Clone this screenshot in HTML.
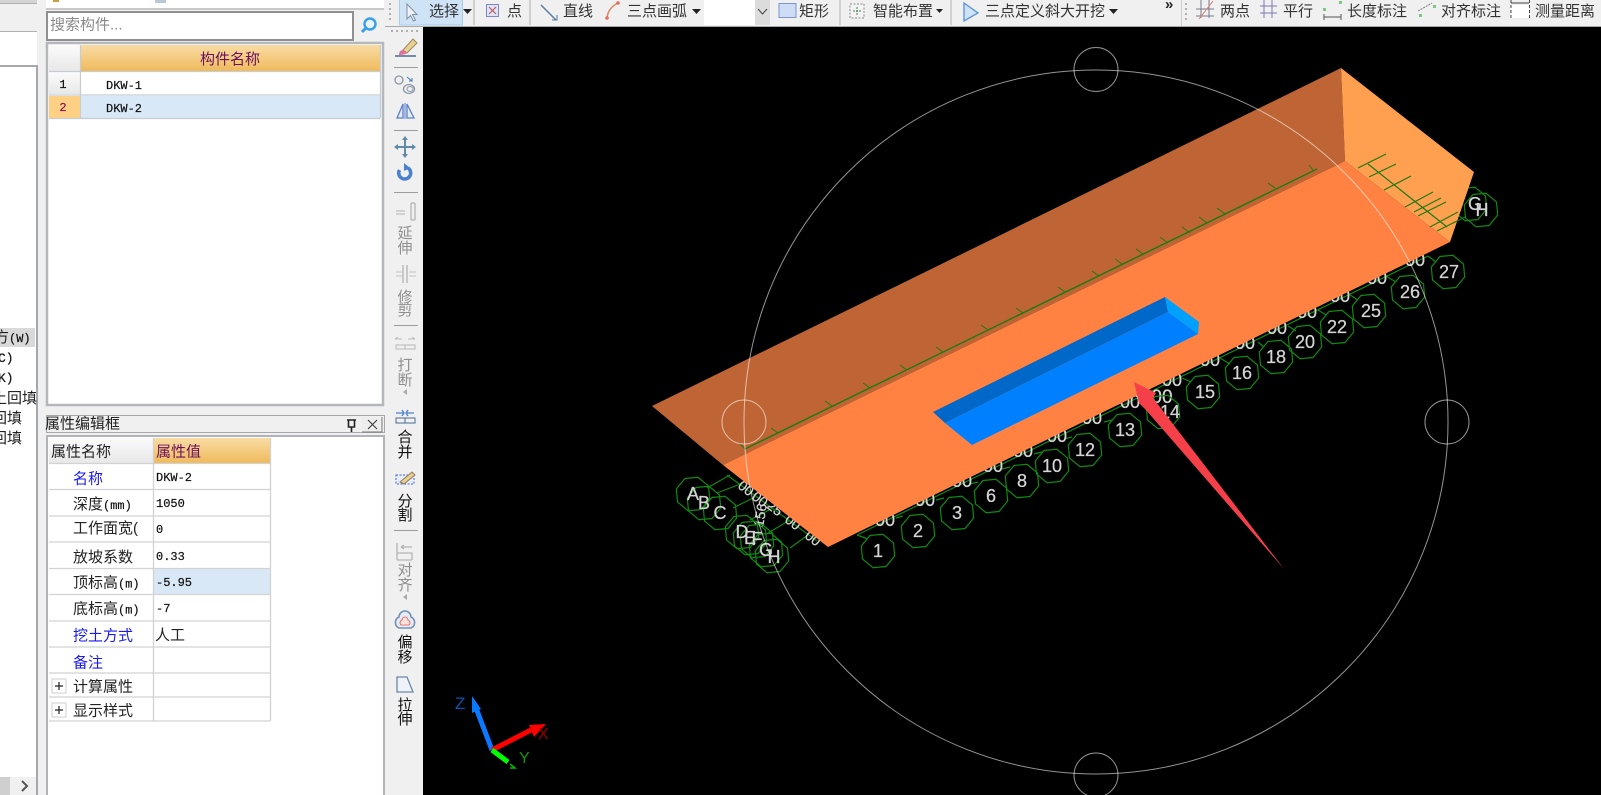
<!DOCTYPE html>
<html lang="zh">
<head>
<meta charset="utf-8">
<title>属性编辑</title>
<style>
html,body{margin:0;padding:0;background:#f0f0f0;width:1601px;height:795px;overflow:hidden}
svg{display:block;position:absolute;left:0;top:0;filter:blur(.35px)}
text{font-family:"Liberation Sans","Noto Sans CJK SC",sans-serif;font-size:15px;fill:#222;white-space:pre}
.m{font-family:"Liberation Mono","Noto Sans CJK SC",monospace;font-size:12px;fill:#111;stroke:#111;stroke-width:.2}
.b{fill:#1a1aee}
.d{fill:#8f8f8f}
.w{fill:#d4d4d4;font-size:18px;text-anchor:middle;stroke:#d4d4d4;stroke-width:.25}
.tb{fill:#333}
.c{text-anchor:middle}
</style>
</head>
<body>
<svg width="1601" height="795" viewBox="0 0 1601 795" xmlns="http://www.w3.org/2000/svg">
<defs>
<linearGradient id="go" x1="0" y1="0" x2="0" y2="1"><stop offset="0" stop-color="#f8dca4"/><stop offset="1" stop-color="#f0ba5c"/></linearGradient>
<linearGradient id="gg" x1="0" y1="0" x2="0" y2="1"><stop offset="0" stop-color="#fbfbfb"/><stop offset="1" stop-color="#e8e8e8"/></linearGradient>
<polygon id="o" points="16.7,5 8,15.5 -5,16.7 -15.5,8 -16.7,-5 -8,-15.5 5,-16.7 15.5,-8" fill="none" stroke="#108a10" stroke-width="1.2"/>
</defs>

<rect width="1601" height="795" fill="#f0f0f0"/>

<!-- left panel -->
<rect x="0" y="0" width="37" height="3" fill="#d4d4d4"/>
<rect x="0" y="3" width="37" height="1" fill="#b0b0b0"/>
<rect x="0" y="31" width="37" height="1" fill="#b0b0b0"/>
<rect x="0" y="32" width="37" height="33" fill="#fff"/>
<rect x="0" y="65" width="37" height="2" fill="#a4a8ac"/>
<rect x="0" y="67" width="36" height="728" fill="#fff"/>
<rect x="36" y="65" width="2" height="730" fill="#a4a8ac"/>
<rect x="0" y="328" width="35" height="19" fill="#d9d9d9"/>
<text x="-6" y="342" font-size="14">方<tspan class="m">(W)</tspan></text>
<text x="-2" y="362" class="m" style="font-size:13px">C)</text>
<text x="-2" y="382" class="m" style="font-size:13px">K)</text>
<text x="-8" y="403">土回填</text>
<text x="-8" y="423">回填</text>
<text x="-8" y="443">回填</text>
<rect x="0" y="777" width="36" height="18" fill="#f0f0f0"/>
<rect x="0" y="777" width="10" height="18" fill="#cfcfcf"/>
<path d="M22 781l5 5-5 5" fill="none" stroke="#555" stroke-width="2"/>

<!-- middle top -->
<rect x="46" y="0" width="338" height="8" fill="#fff"/>
<rect x="46" y="8" width="338" height="2" fill="#c8c8c8"/>
<rect x="53" y="0" width="6" height="2" fill="#c9a040"/>
<rect x="155" y="0" width="11" height="3" fill="#b8c8d8"/>
<rect x="47" y="12" width="306" height="28" fill="#fff" stroke="#909090" stroke-width="2"/>
<text x="50" y="29.500" style="fill:#8a8a8a">搜索构件...</text>
<circle cx="370" cy="24" r="5.500" fill="#eaf6ff" stroke="#3a9fe8" stroke-width="2.400"/>
<path d="M365.500 28.500L362 32" stroke="#3a9fe8" stroke-width="3"/>

<!-- component table -->
<rect x="47" y="43" width="336" height="362" fill="#fff" stroke="#b4b8bc" stroke-width="2.500"/>
<rect x="49" y="45" width="31" height="26" fill="url(#gg)"/>
<rect x="81" y="45" width="299" height="26" fill="url(#go)"/>
<text x="230" y="64" class="c" style="fill:#6a1060">构件名称</text>
<rect x="49" y="72" width="31" height="22" fill="url(#gg)"/>
<rect x="81" y="72" width="299" height="22" fill="#fff"/>
<rect x="49" y="96" width="31" height="22" fill="#fdd084"/>
<rect x="81" y="96" width="299" height="22" fill="#d8e8f6"/>
<path d="M49 71.500H380M49 95H380M49 118.500H380M80.500 45V118M380.500 45V118" stroke="#c8ccd0" fill="none" stroke-width="1.200"/>
<text x="63" y="88" class="m c">1</text>
<text x="63" y="111" class="m c" style="fill:#8a1060;stroke:#8a1060">2</text>
<text x="106" y="89" class="m">DKW-1</text>
<text x="106" y="112" class="m">DKW-2</text>

<!-- title bar -->
<rect x="46.500" y="415.500" width="338" height="17" fill="#f0f0f0" stroke="#a8a8a8"/>
<text x="45" y="428.500">属性编辑框</text>
<path d="M347 420h9M348.500 420v7h6v-7M351.500 427v5" fill="none" stroke="#222" stroke-width="1.600"/>
<rect x="362" y="417" width="20" height="15" fill="#ededed"/>
<path d="M362 432H382V417" fill="none" stroke="#777"/>
<path d="M368 420l9 9M377 420l-9 9" stroke="#333"/>

<!-- property panel -->
<rect x="47" y="436" width="337" height="360" fill="#fff" stroke="#b0b4b8" stroke-width="2"/>
<rect x="49" y="438" width="104" height="25" fill="url(#gg)"/>
<rect x="154" y="438" width="116" height="25" fill="url(#go)"/>
<rect x="154" y="569" width="116" height="25" fill="#d8e8f6"/>
<path d="M49 463.500H270M49 489.500H270M49 516H270M49 542H270M49 568.500H270M49 594.500H270M49 621H270M49 647H270M49 673H270M49 697H270M49 721H270M153.500 438V721M270.500 438V721" stroke="#d2d2d2" stroke-width="1.300" fill="none"/>
<text x="51" y="456.500">属性名称</text>
<text x="156" y="456.500" style="fill:#6a1060">属性值</text>
<text x="73" y="483.500" class="b">名称</text>
<text x="73" y="509">深度<tspan class="m">(mm)</tspan></text>
<text x="73" y="533">工作面宽(</text>
<text x="73" y="562">放坡系数</text>
<text x="73" y="587.500">顶标高<tspan class="m">(m)</tspan></text>
<text x="73" y="613.500">底标高<tspan class="m">(m)</tspan></text>
<text x="73" y="640.500" class="b">挖土方式</text>
<text x="73" y="667.500" class="b">备注</text>
<text x="73" y="691.500">计算属性</text>
<text x="73" y="715.500">显示样式</text>
<text x="156" y="481" class="m">DKW-2</text>
<text x="156" y="507" class="m">1050</text>
<text x="156" y="533" class="m">0</text>
<text x="156" y="560" class="m">0.33</text>
<text x="156" y="586" class="m">-5.95</text>
<text x="156" y="612" class="m">-7</text>
<text x="155" y="640">人工</text>
<rect x="52" y="679" width="14" height="14" fill="#fff" stroke="#ccc"/>
<path d="M55 686h8M59 682v8" stroke="#222" stroke-width="1.200"/>
<rect x="52" y="703" width="14" height="14" fill="#fff" stroke="#ccc"/>
<path d="M55 710h8M59 706v8" stroke="#222" stroke-width="1.200"/>

<!-- top toolbar -->
<rect x="385" y="0" width="1216" height="26" fill="#f0f0f0"/>
<rect x="385" y="26" width="1216" height="1" fill="#a8a8a8"/>
<path d="M390 3v20" stroke="#b0b0b0" stroke-width="2" stroke-dasharray="2 3"/>
<rect x="399.500" y="-2" width="63" height="27" fill="#cfe3f7" stroke="#a8cbe8"/>
<path d="M407 4V19L410.500 15.500L413.500 21L415.500 20L412.500 14.500H417Z" fill="#eef2f8" stroke="#7d8fa5"/>
<text x="429" y="16" class="tb">选择</text>
<path d="M463 9h9l-4.500 5z" fill="#222"/>
<path d="M474 0v25" stroke="#b0b0b0"/>
<rect x="486.500" y="4.500" width="12" height="12" fill="#dfe3f5" stroke="#7c88c8"/>
<path d="M489 7l7 7M496 7l-7 7" stroke="#c05050"/>
<text x="507" y="16" class="tb">点</text>
<path d="M530 0v25" stroke="#b0b0b0"/>
<path d="M541 5L556 20" stroke="#5a7aa0" stroke-width="1.500"/><path d="M552 20h5v-5" fill="none" stroke="#5a7aa0"/>
<text x="563" y="16" class="tb">直线</text>
<path d="M607 18Q608 8 618 3" fill="none" stroke="#d98a60" stroke-width="1.500"/>
<circle cx="607" cy="18" r="1.800" fill="#e07060"/><circle cx="618" cy="3" r="1.800" fill="#e07060"/>
<text x="627" y="16" class="tb">三点画弧</text>
<path d="M692 9h9l-4.500 5z" fill="#222"/>
<rect x="704" y="0" width="51" height="25" fill="#fff"/>
<rect x="755" y="0" width="15" height="25" fill="#dcdcdc"/>
<path d="M758 9l4.500 5 4.500-5" fill="none" stroke="#444"/>
<rect x="779" y="3.500" width="17" height="14" fill="#cfdcf5" stroke="#7c96d0"/>
<text x="799" y="16" class="tb">矩形</text>
<path d="M840 0v25" stroke="#b0b0b0"/>
<rect x="850" y="4" width="14" height="14" fill="#f4f4f4" stroke="#888" stroke-dasharray="2 1.500"/>
<path d="M857 7v8M853 11h8" stroke="#4a7a4a" stroke-dasharray="2 1"/>
<text x="873" y="16" class="tb">智能布置</text>
<path d="M936 9h7l-3.500 4z" fill="#222"/>
<path d="M951 0v25" stroke="#b0b0b0"/>
<path d="M964 3V21L978 13Z" fill="#cfe3f7" stroke="#5a90d8" stroke-width="1.300"/>
<text x="985" y="16" class="tb">三点定义斜大开挖</text>
<path d="M1109 9h9l-4.500 5z" fill="#222"/>
<text x="1165" y="9" style="font-size:15px;font-weight:bold">»</text>
<path d="M1181.500 0v26" stroke="#d0d0d0"/>
<path d="M1186 3v20" stroke="#b0b0b0" stroke-width="2" stroke-dasharray="2 3"/>
<path d="M1201 0V18M1209 0V18M1196 9H1214M1196 16H1214" stroke="#7a7a90" fill="none"/>
<path d="M1199 19L1213 1" stroke="#d88070"/>
<text x="1220" y="16" class="tb">两点</text>
<path d="M1264 0V18M1272 0V18M1260 6H1277M1260 13H1277" stroke="#7c78b0" fill="none"/>
<text x="1283" y="16" class="tb">平行</text>
<path d="M1324 14v6M1341 14v6M1324 17h17" stroke="#555"/>
<rect x="1323" y="8" width="3" height="3" fill="#7cc87c"/><rect x="1339" y="1" width="3" height="3" fill="#7cc87c"/>
<text x="1347" y="16" class="tb">长度标注</text>
<path d="M1418 11l14-8" stroke="#777" stroke-dasharray="2 1"/>
<rect x="1419" y="14" width="3" height="3" fill="#7cc87c"/><rect x="1433" y="5" width="3" height="3" fill="#7cc87c"/>
<text x="1441" y="16" class="tb">对齐标注</text>
<rect x="1511" y="5" width="18" height="13" fill="#fff"/>
<path d="M1511 3h18" stroke="#444"/>
<path d="M1511 0v18M1529.500 0v18" stroke="#444" stroke-dasharray="3 2" fill="none"/>
<text x="1535" y="16" class="tb">测量距离</text>

<!-- vertical toolbar -->
<rect x="390" y="27" width="33" height="768" fill="#f0f0f0"/>
<path d="M391 31H420" stroke="#b0b0b0" stroke-width="2" stroke-dasharray="2 3"/>
<path d="M395 56h21" stroke="#4a6a90" stroke-width="1.500"/>
<path d="M403 50L413 39L417 43L407 53Z" fill="#e8d090" stroke="#9a8a60"/>
<path d="M399 55Q399 50 403 50L407 53Q405 55 399 55Z" fill="#e070a0"/>
<path d="M394 67.500H418M394 130.500H418M394 192.500H418M394 325.500H418M394 530.500H418" stroke="#9c9c9c"/>
<circle cx="399" cy="80" r="4" fill="none" stroke="#8a97a8" stroke-width="1.300"/>
<path d="M407 77l5 4M412 78v3h-3" fill="none" stroke="#4a7ab0"/>
<ellipse cx="409" cy="89" rx="5.500" ry="4.500" fill="none" stroke="#8a97a8" stroke-width="1.300"/>
<ellipse cx="410" cy="89" rx="3" ry="2.500" fill="none" stroke="#8a97a8"/>
<path d="M397 118L403 104V118ZM407 104L414 118H407Z" fill="#e4ecfa" stroke="#5a7fc8" stroke-width="1.300"/>
<path d="M405 103V119" stroke="#5a7fc8"/>
<path d="M397 147H413M405 139V155" stroke="#5f8aa8" stroke-width="2"/>
<path d="M405 136l-3 4h6zM405 158l-3-4h6zM394 147l4-3v6zM416 147l-4-3v6z" fill="#5f8aa8"/>
<path d="M399.500 170A6 6 0 1 0 408 168" fill="none" stroke="#4a80d0" stroke-width="3.500"/>
<path d="M404 163l6 5-6 3z" fill="#4a80d0"/>
<path d="M411 203V220M415 203V220M411 203H415M411 220H415" stroke="#b4b4b4" fill="none" stroke-width="1.300"/>
<path d="M396 211h9M396 214h9" stroke="#b4b4b4"/>
<text x="405" y="238" class="c d">延</text>
<text x="405" y="253" class="c d">伸</text>
<path d="M403 265V283M407 265V283" stroke="#b4b4b4" stroke-width="1.300"/><path d="M396 272H403M396 276H403M409 272H416M409 276H416" stroke="#c4c4c4"/>
<text x="405" y="302" class="c d">修</text>
<text x="405" y="315" class="c d">剪</text>
<path d="M395 339h7M408 339h7M395 339l3-2M415 339l-3-2M396 345H415V349H396ZM405 345V349" stroke="#b8b8b8" fill="none"/>
<text x="405" y="370" class="c d">打</text>
<text x="405" y="385" class="c d">断</text>
<path d="M407 389v6l-4-3z" fill="#aaa"/>
<path d="M396 413h7M414 413h-7M402 410l2 3-2 3M408 410l-2 3 2 3" stroke="#4a80d0" fill="none" stroke-width="1.300"/>
<path d="M396 418H415V423H396ZM405 418V423" stroke="#4a6a90" fill="none"/>
<text x="405" y="442" class="c" style="fill:#111">合</text>
<text x="405" y="457" class="c" style="fill:#111">并</text>
<rect x="396" y="475" width="18" height="9" fill="#e8eef8" stroke="#4060e0" stroke-dasharray="2 1.500"/>
<path d="M400 482L412 472L415 475L404 484Z" fill="#e8d090" stroke="#907858"/>
<text x="405" y="506" class="c" style="fill:#111">分</text>
<text x="405" y="520" class="c" style="fill:#111">割</text>
<path d="M397 543V560M397 560H412M397 553H412V560M401 547H412M401 547l3-2M401 547l3 2" stroke="#b4b4b4" fill="none" stroke-width="1.300"/>
<text x="405" y="575" class="c d">对</text>
<text x="405" y="590" class="c d">齐</text>
<path d="M407 594v6l-4-3z" fill="#aaa"/>
<path d="M399 628a6 6 0 0 1 0-11 6 6 0 0 1 12 0 6 6 0 0 1 0 11Z" fill="#e4ecfa" stroke="#7890b0" stroke-width="1.600"/>
<path d="M401 625a3 3 0 0 1 1-5 3 3 0 0 1 6 0 3 3 0 0 1 1 5Z" fill="#fbe4e0" stroke="#e07a70" stroke-width="1.100"/>
<text x="405" y="647" class="c" style="fill:#111">偏</text>
<text x="405" y="662" class="c" style="fill:#111">移</text>
<path d="M397 677H407L413 692H397Z" fill="#eef2f8" stroke="#6a88a8" stroke-width="1.300"/>
<text x="405" y="710" class="c" style="fill:#111">拉</text>
<text x="405" y="724" class="c" style="fill:#111">伸</text>

<!-- canvas -->
<rect x="423" y="27" width="1178" height="768" fill="#000"/>

<!-- grid under the pit -->
<path d="M857 535L1428 256" stroke="#108a10" stroke-width="1.200" fill="none"/>
<path d="M868 539L857 535M903 516L896 518M944 498L936 500M978 482L970 484M1010 467L1002 469M1042 452L1034 454M1072 437L1064 439M1112 420L1104 422M1152 402L1140 396M1191 382L1182 378M1230 364L1220 358M1264 347L1258 342M1296 331L1288 326M1326 315L1318 310M1358 300L1350 295M1396 282L1386 276M1436 262L1428 256" stroke="#108a10" stroke-width="1.200" fill="none"/>
<path d="M707 488L730 475M717 493L743 483M733 508L755 497M750 520L773 508M768 533L790 520M790 548L808 535M727 475L817 541" stroke="#108a10" stroke-width="1.200" fill="none"/>
<text class="w" x="885" y="526">00</text><text class="w" x="925" y="506">00</text><text class="w" x="962" y="487">00</text><text class="w" x="993" y="472">00</text><text class="w" x="1023" y="457">00</text><text class="w" x="1057" y="442">00</text><text class="w" x="1092" y="424">00</text><text class="w" x="1130" y="408">00</text><text class="w" x="1172" y="386">00</text><text class="w" x="1210" y="366">00</text><text class="w" x="1245" y="349">00</text><text class="w" x="1277" y="334">00</text><text class="w" x="1307" y="318">00</text><text class="w" x="1340" y="302">00</text><text class="w" x="1377" y="284">00</text><text class="w" x="1415" y="266">00</text>
<text class="w" x="1162" y="403" style="font-size:19px">00</text>
<text class="w" x="743" y="492" transform="rotate(38 743 492)" style="font-size:14px">00</text>
<text class="w" x="757" y="503" transform="rotate(38 757 503)" style="font-size:14px">00</text>
<text class="w" x="772" y="512" transform="rotate(38 772 512)" style="font-size:14px">25</text>
<text class="w" x="790" y="526" transform="rotate(38 790 526)" style="font-size:14px">00</text>
<text class="w" x="810" y="542" transform="rotate(38 810 542)" style="font-size:14px">00</text>
<text class="w" x="765" y="516" transform="rotate(-80 765 516)" style="font-size:14px">156</text>

<use href="#o" x="878" y="551"/><use href="#o" x="918" y="531"/><use href="#o" x="957" y="513"/><use href="#o" x="991" y="496"/><use href="#o" x="1022" y="481"/><use href="#o" x="1052" y="466"/><use href="#o" x="1085" y="450"/><use href="#o" x="1125" y="430"/><use href="#o" x="1163" y="412"/><use href="#o" x="1203" y="392"/><use href="#o" x="1242" y="373"/><use href="#o" x="1276" y="357"/><use href="#o" x="1305" y="342"/><use href="#o" x="1337" y="327"/><use href="#o" x="1369" y="311"/><use href="#o" x="1408" y="292"/><use href="#o" x="1448" y="272"/>
<use href="#o" x="693" y="494"/><use href="#o" x="704" y="503"/><use href="#o" x="720" y="513"/><use href="#o" x="742" y="532"/><use href="#o" x="750" y="538"/><use href="#o" x="757" y="541"/><use href="#o" x="766" y="550"/><use href="#o" x="772" y="556"/>
<use href="#o" x="1470" y="204"/><use href="#o" x="1481" y="210"/>
<text class="w" x="878" y="557">1</text><text class="w" x="918" y="537">2</text><text class="w" x="957" y="519">3</text><text class="w" x="991" y="502">6</text><text class="w" x="1022" y="487">8</text><text class="w" x="1052" y="472">10</text><text class="w" x="1085" y="456">12</text><text class="w" x="1125" y="436">13</text><text class="w" x="1170" y="418">14</text><text class="w" x="1205" y="398">15</text><text class="w" x="1242" y="379">16</text><text class="w" x="1276" y="363">18</text><text class="w" x="1305" y="348">20</text><text class="w" x="1337" y="333">22</text><text class="w" x="1371" y="317">25</text><text class="w" x="1410" y="298">26</text><text class="w" x="1449" y="278">27</text>
<text class="w" x="693" y="500">A</text><text class="w" x="704" y="509">B</text><text class="w" x="720" y="519">C</text><text class="w" x="742" y="538">D</text><text class="w" x="750" y="544">E</text><text class="w" x="757" y="545">F</text><text class="w" x="766" y="556">G</text><text class="w" x="774" y="563">H</text>
<text class="w" x="1475" y="210">G</text><text class="w" x="1482" y="216">H</text>

<!-- pit -->
<polygon points="652,406 1341,68 1345,161 723,465" fill="#bf6535"/>
<polygon points="723,465 1345,161 1450,242 828,547" fill="#ff8242"/>
<polygon points="1341,68 1474,172 1450,242 1345,161" fill="#ffa050"/>

<!-- blue -->
<polygon points="933,412 1165,297 1168,312 945,423" fill="#0068c8"/>
<polygon points="945,423 1168,312 1198,334 972,445" fill="#0080ff"/>
<polygon points="1165,297 1199,322 1198,334 1168,312" fill="#00a0ff"/>

<!-- green on pit -->
<path d="M745 449L1317 169" stroke="#1e7a10" stroke-width="1.400"/>
<path d="M745 449l-5-5M778 433l-7-5M832 406l-7-5M870 388l-7-5M907 370l-7-5M943 352l-7-5M988 330l-7-5M1023 313l-7-5M1065 292l-7-5M1099 276l-7-5M1122 264l-7-5M1143 254l-7-5M1168 243l-8-6M1190 233l-8-6M1207 223l-8-6M1225 214l-8-6M1275 188l-7-5M1313 170l-4-5" stroke="#1e7a10" fill="none"/>
<path d="M1368 164L1447 227M1358 168L1386 154M1369 177L1396 164M1384 190L1411 176M1405 207L1433 192M1414 212L1441 198M1418 216L1446 202M1430 227L1458 212M1437 231L1465 217" stroke="#1e7a10" stroke-width="1.200" fill="none"/>

<!-- circles -->
<g fill="none" stroke="#fff" stroke-opacity=".58" stroke-width="1">
<circle cx="1096" cy="422" r="352"/>
<circle cx="1096" cy="69.500" r="22"/>
<circle cx="744" cy="422" r="22"/>
<circle cx="1447" cy="422" r="22"/>
<circle cx="1096" cy="775" r="22"/>
</g>

<!-- red arrow -->
<polygon points="1134,382 1156,393 1153,398 1284,569 1146,410 1139,403" fill="#f5404a"/>

<!-- axis -->
<path d="M492 750L476 708" stroke="#0a78ff" stroke-width="5"/>
<polygon points="472,696 481,709 472,713" fill="#0a78ff"/>
<path d="M492 750L531 730" stroke="#f00" stroke-width="5"/>
<polygon points="546,724 534,737 529,725" fill="#f00"/>
<path d="M492 750L508 762" stroke="#0f0" stroke-width="5"/>
<path d="M510 764l5 4-5 0" fill="none" stroke="#0b0" stroke-width="1.500"/>
<text x="455" y="709" style="font-size:17px;fill:#0a50b0">Z</text>
<text x="538" y="739" style="font-size:16px;fill:#990000">X</text>
<text x="519" y="763" style="font-size:16px;fill:#0a9a0a">Y</text>
</svg>
</body>
</html>
